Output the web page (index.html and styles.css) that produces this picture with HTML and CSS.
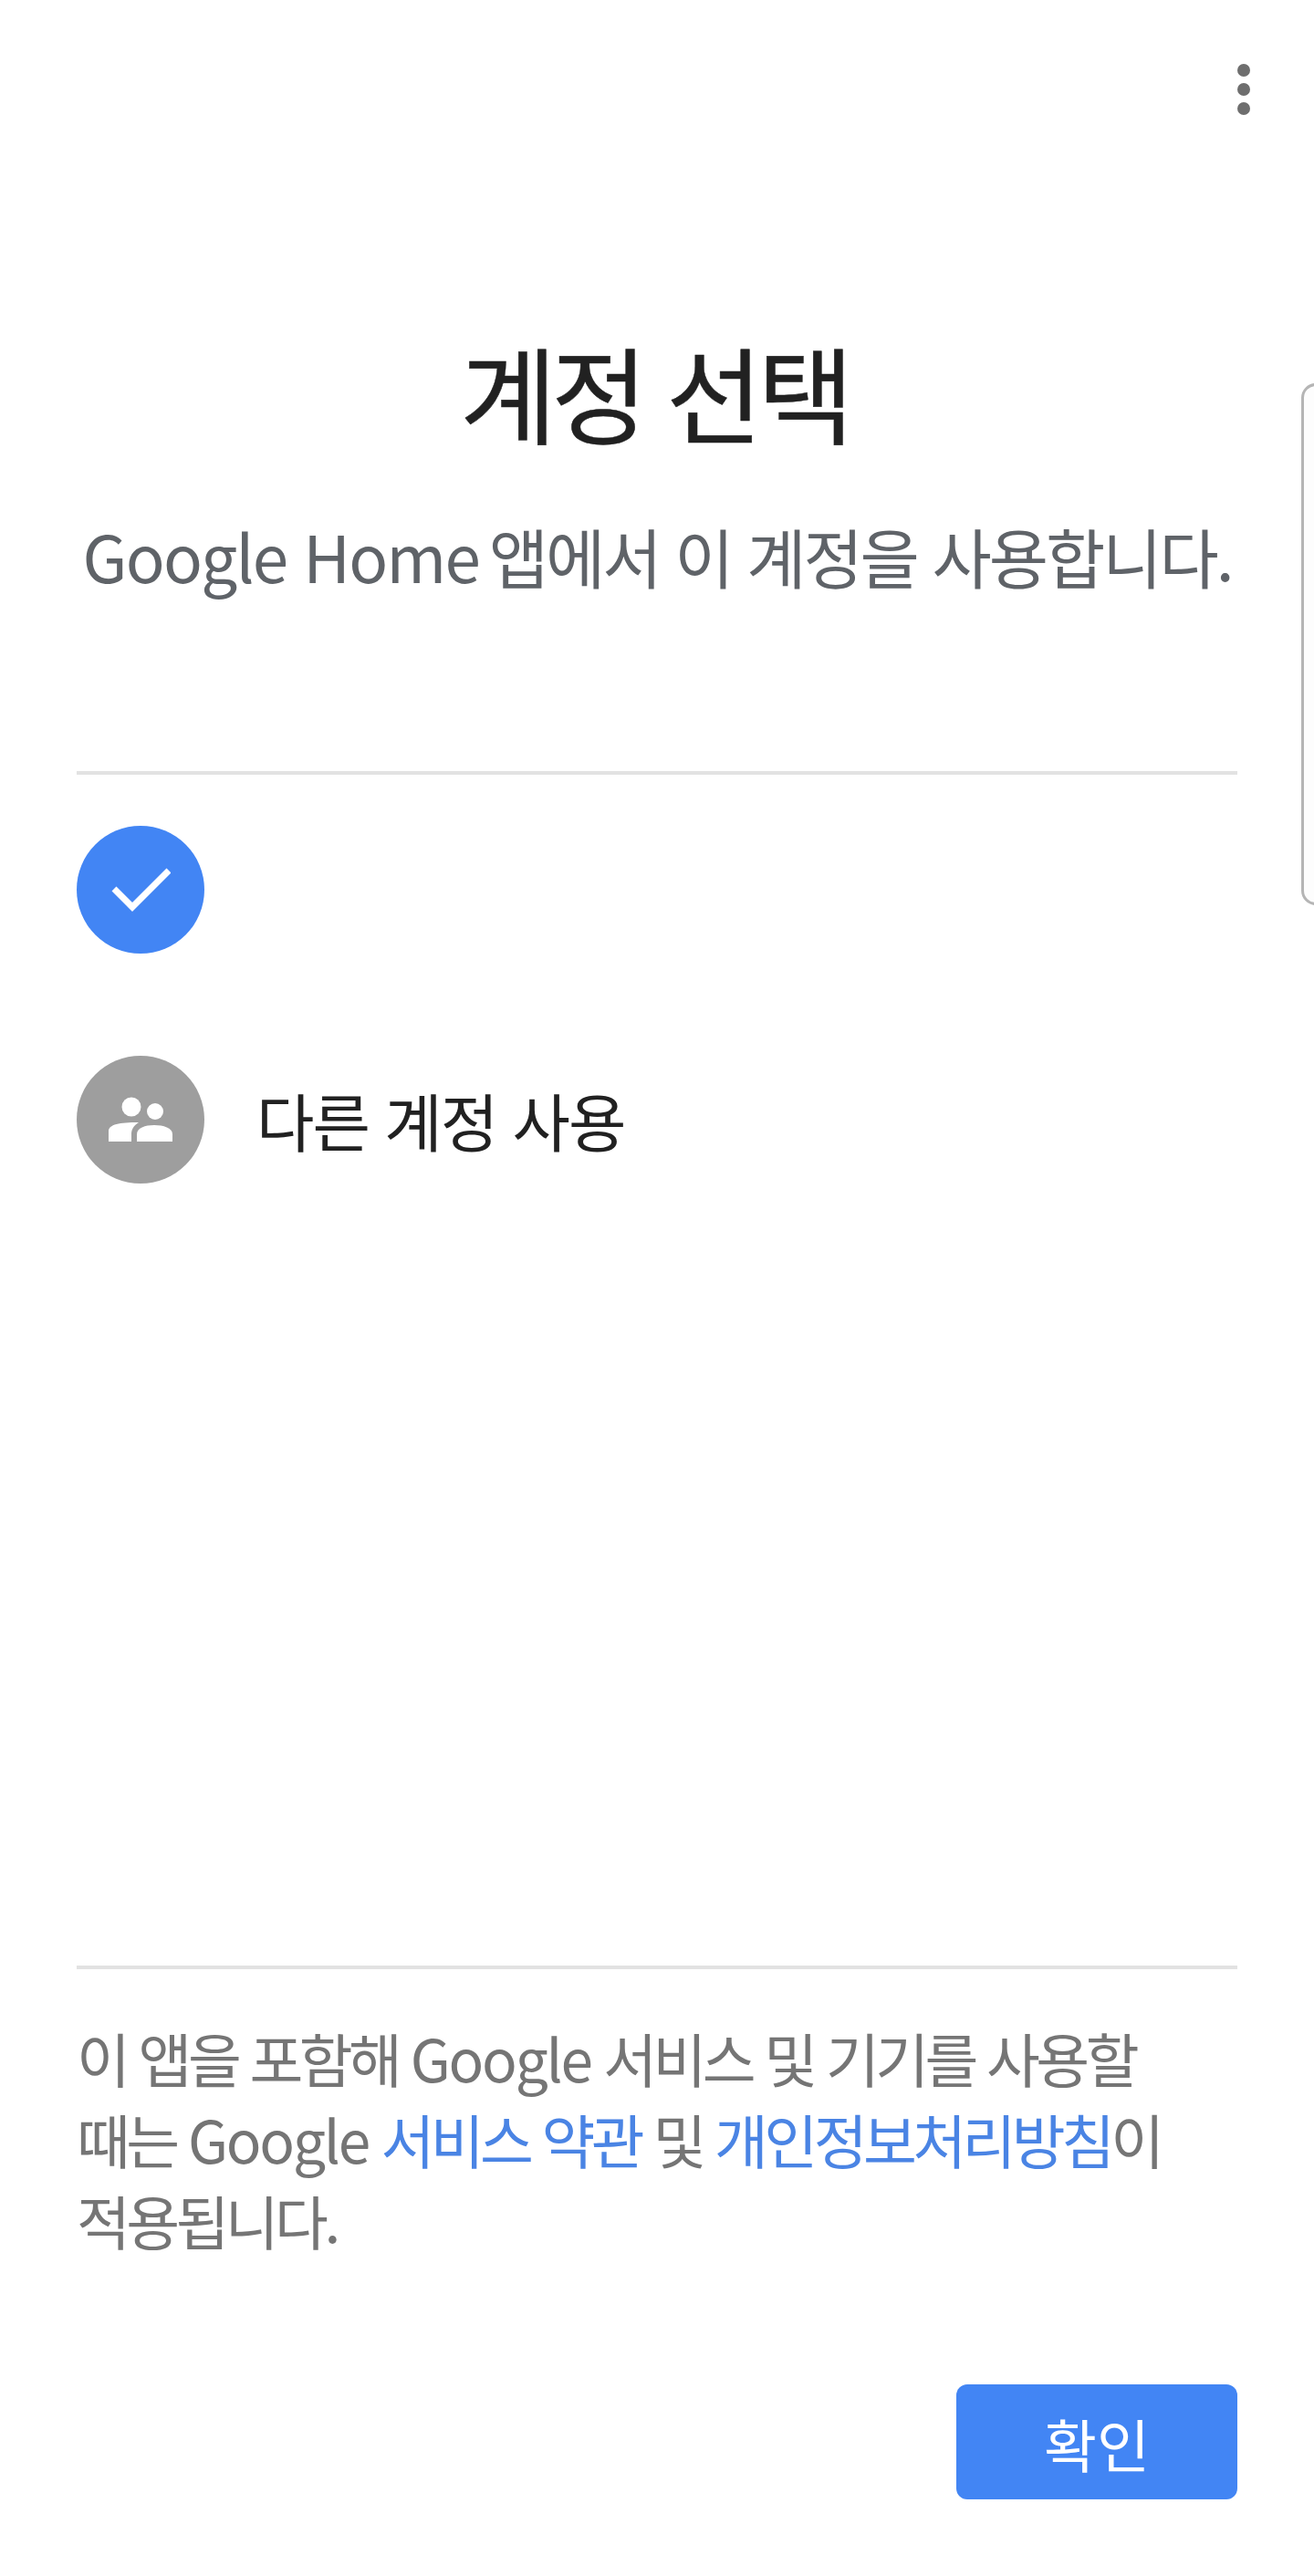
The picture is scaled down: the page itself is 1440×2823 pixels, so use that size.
FILE: index.html
```html
<!DOCTYPE html>
<html lang="ko">
  <head>
    <title>계정 선택</title>
    <meta name="viewport" content="width=device-width, initial-scale=1">
    <link rel="stylesheet" href="styles.css">
  </head>
  <body>
    <div class="screen">
      <div class="topbar">
        <button class="more" aria-label="더보기">
          <span class="dot"></span>
          <span class="dot"></span>
          <span class="dot"></span>
        </button>
      </div>
      <h1 class="title">계정 선택</h1>
      <p class="subtitle"><span class="latin">Google Home</span> 앱에서 이 계정을 사용합니다.</p>
      <div class="accounts">
        <div class="account">
          <span class="avatar avatar-blue">
            <svg width="66" height="50" viewBox="0 0 66 50">
              <path d="M4 24 L24 44 L64 4" fill="none" stroke="#fff" stroke-width="7"/>
            </svg>
          </span>
        </div>
        <div class="account">
          <span class="avatar avatar-grey">
            <svg width="70" height="50" viewBox="0 0 70 50">
              <circle cx="25" cy="11" r="10.5" fill="#fff"/>
              <circle cx="51" cy="16" r="9" fill="#fff"/>
              <path d="M0 49 V38 C0 30 12 28 33 28 C27 32 25 36 25 41 V49 Z" fill="#fff"/>
              <path d="M31 49 V41 C31 34 40 31 50 31 C60 31 70 34 70 41 V49 Z" fill="#fff"/>
            </svg>
          </span>
          <span class="account-name">다른 계정 사용</span>
        </div>
      </div>
      <div class="terms">
        <p>이 앱을 포함해 <span class="latin">Google</span> 서비스 및 기기를 사용할<br>때는 <span class="latin">Google</span> <a href="#">서비스 약관</a> 및 <a href="#">개인정보처리방침</a>이<br>적용됩니다.</p>
      </div>
      <div class="actions">
        <button class="confirm">확인</button>
      </div>
      <div class="edge-handle"></div>
    </div>
  </body>
</html>
```

FILE: styles.css
```css
* {
  box-sizing: border-box;
}
body {
  margin: 0;
  background-color: #fff;
  font-family: "Noto Sans CJK KR", "Noto Sans", sans-serif;
}
.screen {
  position: relative;
  display: flex;
  flex-direction: column;
  width: 1440px;
  height: 2823px;
  padding: 0 84px;
  overflow: hidden;
}
.topbar {
  display: flex;
  justify-content: flex-end;
  height: 130px;
  margin-right: -14px;
  padding-top: 70px;
}
.more {
  display: flex;
  flex-direction: column;
  gap: 7px;
  height: 56px;
  padding: 0;
  border: 0;
  background: none;
}
.dot {
  width: 14px;
  height: 14px;
  border-radius: 50%;
  background-color: #6e6e6e;
}
.title {
  margin: 248px 0 0;
  padding-right: 6px;
  height: 100px;
  font-size: 115px;
  line-height: 100px;
  font-weight: 400;
  letter-spacing: -6px;
  -webkit-text-stroke: 0.5px #212121;
  text-align: center;
  color: #212121;
}
.subtitle {
  margin: 85px 0 0;
  font-size: 71px;
  line-height: 90px;
  font-weight: 400;
  letter-spacing: -3.1px;
  text-align: center;
  white-space: nowrap;
  color: #5f6368;
}
.subtitle .latin {
  letter-spacing: -1.8px;
  margin-right: -6px;
}
.accounts {
  margin-top: 192px;
  padding-top: 56px;
  border-top: 4px solid #e2e2e2;
  height: 1313px;
  border-bottom: 4px solid #e2e2e2;
}
.account {
  display: flex;
  align-items: center;
  gap: 57px;
  height: 140px;
  margin-bottom: 112px;
}
.avatar {
  display: flex;
  align-items: center;
  justify-content: center;
  width: 140px;
  height: 140px;
  border-radius: 50%;
}
.avatar-blue {
  background-color: #4285f4;
}
.avatar-grey {
  background-color: #9e9e9e;
}
.account-name {
  font-size: 69px;
  letter-spacing: -2px;
  color: #212121;
}
.terms {
  margin-top: 52px;
  font-size: 64px;
  line-height: 89px;
  font-weight: 400;
  letter-spacing: -4.6px;
  color: #757575;
}
.terms p {
  margin: 0;
  white-space: nowrap;
}
.terms .latin {
  letter-spacing: -2.2px;
}
.terms a {
  color: #4a84e4;
  text-decoration: none;
}
.actions {
  display: flex;
  justify-content: flex-end;
  margin-top: 136px;
}
.confirm {
  width: 308px;
  height: 126px;
  border: 0;
  border-radius: 12px;
  background-color: #4285f4;
  color: #fff;
  font-family: inherit;
  font-size: 63px;
}
.edge-handle {
  position: absolute;
  top: 420px;
  right: -20px;
  width: 34px;
  height: 572px;
  border: 3px solid #b5b5b5;
  border-radius: 16px;
  background-color: #fdfdfd;
}
```
